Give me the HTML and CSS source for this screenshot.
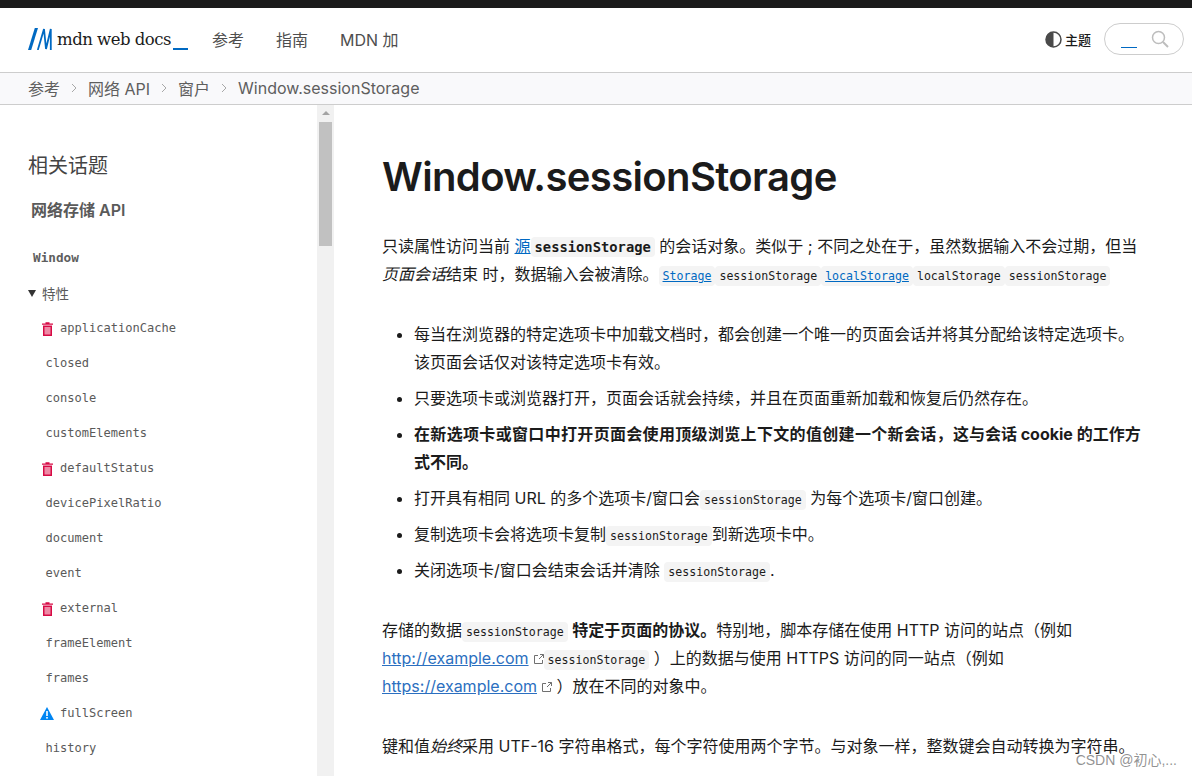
FILE: index.html
```html
<!DOCTYPE html>
<html lang="zh-CN">
<head>
<meta charset="utf-8">
<title>Window.sessionStorage</title>
<link rel="stylesheet" href="styles.css">
</head>
<body>
<div class="topline"></div>
<header class="header">
  <div class="logo">
    <svg class="logo-mark" width="24" height="22" viewBox="0 0 24 22"><path d="M0 22 6.800 0h3.200L3.200 22z" fill="#0069c2"/><path d="M9.800 22 16 1l2 20 4.800-20v21" fill="none" stroke="#0069c2" stroke-width="1.800" stroke-linejoin="bevel"/></svg>
    <span class="logo-text">mdn web docs</span>
    <span class="logo-cursor"></span>
  </div>
  <nav class="nav"><span>参考</span><span>指南</span><span>MDN 加</span></nav>
  <div class="tools">
    <span class="theme">
      <svg width="17" height="17" viewBox="0 0 17 17"><circle cx="8.500" cy="8.500" r="7.500" fill="#fff" stroke="#4a4a4a" stroke-width="1.500"/><path d="M8.500 1a7.500 7.500 0 0 0 0 15z" fill="#4a4a4a"/></svg>
      <span>主题</span>
    </span>
    <div class="search">
      <span class="search-cursor"></span>
      <svg width="18" height="18" viewBox="0 0 18 18" fill="none" stroke="#bdbdbd" stroke-width="1.500"><circle cx="7.500" cy="7.500" r="6"/><path d="M12 12l5 5" stroke-width="2"/></svg>
    </div>
  </div>
</header>
<div class="crumbs">
  <span>参考</span><svg class="chev" width="6" height="10" viewBox="0 0 6 10"><path d="M1 1l4 4-4 4" fill="none" stroke="#a8a8a8"/></svg>
  <span>网络 API</span><svg class="chev" width="6" height="10" viewBox="0 0 6 10"><path d="M1 1l4 4-4 4" fill="none" stroke="#a8a8a8"/></svg>
  <span>窗户</span><svg class="chev" width="6" height="10" viewBox="0 0 6 10"><path d="M1 1l4 4-4 4" fill="none" stroke="#a8a8a8"/></svg>
  <span>Window.sessionStorage</span>
</div>
<div class="layout">
  <aside class="sidebar">
    <div class="side-inner">
      <h2 class="side-title">相关话题</h2>
      <h3 class="side-sub">网络存储 API</h3>
      <div class="side-window">Window</div>
      <div class="side-group"><span class="tri"></span>特性</div>
      <ul class="side-list">
        <li class="with-icon"><svg class="trash" width="13" height="14" viewBox="0 0 13 14"><path d="M4.500 1.500V.3h4v1.200H12v1.300H1V1.500z" fill="#d70a45"/><path d="M2 3.500h9V14H2z" fill="#d70a45"/><rect x="3.500" y="5" width="6" height="7.500" fill="#ee8aa6"/></svg>applicationCache</li>
        <li>closed</li>
        <li>console</li>
        <li>customElements</li>
        <li class="with-icon"><svg class="trash" width="13" height="14" viewBox="0 0 13 14"><path d="M4.500 1.500V.3h4v1.200H12v1.300H1V1.500z" fill="#d70a45"/><path d="M2 3.500h9V14H2z" fill="#d70a45"/><rect x="3.500" y="5" width="6" height="7.500" fill="#ee8aa6"/></svg>defaultStatus</li>
        <li>devicePixelRatio</li>
        <li>document</li>
        <li>event</li>
        <li class="with-icon"><svg class="trash" width="13" height="14" viewBox="0 0 13 14"><path d="M4.500 1.500V.3h4v1.200H12v1.300H1V1.500z" fill="#d70a45"/><path d="M2 3.500h9V14H2z" fill="#d70a45"/><rect x="3.500" y="5" width="6" height="7.500" fill="#ee8aa6"/></svg>external</li>
        <li>frameElement</li>
        <li>frames</li>
        <li class="with-icon"><svg class="warn-icon" width="14" height="13" viewBox="0 0 14 13"><path d="M7 0l7 13H0z" fill="#0085f2"/><rect x="6.200" y="4" width="1.600" height="5" fill="#fff"/><rect x="6.200" y="10" width="1.600" height="1.600" fill="#fff"/></svg>fullScreen</li>
        <li>history</li>
      </ul>
    </div>
  </aside>
  <div class="scrollbar">
    <span class="scroll-up"></span>
    <div class="scroll-thumb"></div>
  </div>
  <main class="content">
    <h1>Window.sessionStorage</h1>
    <p class="intro">只读属性访问当前 <a>源</a><code class="strong-code">sessionStorage</code> 的会话对象。类似于 ; 不同之处在于，虽然数据输入不会过期，但当 <em>页面会话</em>结束 时，数据输入会被清除。<code><a>Storage</a></code><code>sessionStorage</code><code><a>localStorage</a></code><code>localStorage</code><code>sessionStorage</code></p>
    <ul class="points">
      <li>每当在浏览器的特定选项卡中加载文档时，都会创建一个唯一的页面会话并将其分配给该特定选项卡。该页面会话仅对该特定选项卡有效。</li>
      <li>只要选项卡或浏览器打开，页面会话就会持续，并且在页面重新加载和恢复后仍然存在。</li>
      <li><strong class="wide">在新选项卡或窗口中打开页面会使用顶级浏览上下文的值创建一个新会话，</strong><strong>这与会话 cookie 的工作方式不同。</strong></li>
      <li>打开具有相同 URL 的多个选项卡/窗口会<code>sessionStorage</code> 为每个选项卡/窗口创建。</li>
      <li>复制选项卡会将选项卡复制<code>sessionStorage</code>到新选项卡中。</li>
      <li>关闭选项卡/窗口会结束会话并清除 <code>sessionStorage</code>.</li>
    </ul>
    <p class="para">存储的数据<code>sessionStorage</code> <strong>特定于页面的协议。</strong>特别地，脚本存储在使用 HTTP 访问的站点（例如 <a class="ext">http://example.com</a><svg class="ext-icon" width="10" height="10" viewBox="0 0 10 10" fill="none" stroke="#707070"><path d="M4 1.500H.5v8h8V6M5 5l4.500-4.500M6 .5h3.500V4"/></svg><code>sessionStorage</code> ）上的数据与使用 HTTPS 访问的同一站点（例如 <a class="ext">https://example.com</a><svg class="ext-icon" width="10" height="10" viewBox="0 0 10 10" fill="none" stroke="#707070"><path d="M4 1.500H.5v8h8V6M5 5l4.500-4.500M6 .5h3.500V4"/></svg> ）放在不同的对象中。</p>
    <p class="para">键和值<em>始终</em>采用 UTF-16 字符串格式，每个字符使用两个字节。与对象一样，整数键会自动转换为字符串。</p>
  </main>
</div>
<div class="watermark">CSDN @初心,...</div>
</body>
</html>
```
FILE: styles.css
```css
* { box-sizing: border-box; }
html, body { margin: 0; height: 100%; }
body {
  width: 1192px;
  height: 776px;
  overflow: hidden;
  display: flex;
  flex-direction: column;
  position: relative;
  background: #fff;
  color: #1b1b1b;
  font-family: Inter, "Noto Sans CJK SC", sans-serif;
  font-size: 16px;
}
.topline { height: 8px; background: #1b1b1b; flex: none; }
.header {
  height: 65px;
  flex: none;
  display: flex;
  align-items: center;
  padding: 0 8px 2px 28px;
  border-bottom: 1px solid #cdcdcd;
}
.logo { display: flex; align-items: center; width: 184px; }
.logo-mark { flex: none; }
.logo-text {
  font-family: "DejaVu Serif", serif;
  font-size: 16.500px;
  letter-spacing: -.5px;
  margin-left: 5px;
  color: #1b1b1b;
}
.logo-cursor { width: 15px; height: 2px; background: #0069c2; margin: 20px 0 0 2px; }
.nav { display: flex; gap: 32px; color: #4e4e4e; font-size: 16px; }
.tools { margin-left: auto; display: flex; align-items: center; gap: 13px; }
.theme { display: flex; align-items: center; gap: 3px; font-size: 13px; color: #1b1b1b; font-weight: 500; }
.search {
  width: 80px;
  height: 32px;
  border: 1px solid #cdcdcd;
  border-radius: 16px;
  display: flex;
  align-items: center;
  justify-content: space-between;
  padding: 0 14px 0 16px;
  background: #fff;
}
.search-cursor { width: 16px; height: 1px; background: #0069c2; margin-top: 17px; }
.crumbs {
  height: 32px;
  flex: none;
  display: flex;
  align-items: center;
  gap: 11px;
  padding: 0 0 2px 28px;
  background: #f9f9fb;
  border-bottom: 1px solid #cdcdcd;
  color: #5e5e5e;
  font-size: 16px;
}
.layout { flex: 1; display: flex; min-height: 0; }
.sidebar { width: 317px; flex: none; overflow: hidden; }
.side-inner { padding: 48px 0 0 28px; }
.side-title { margin: 0; font-size: 20px; line-height: 26px; font-weight: 400; color: #444; }
.side-sub { margin: 19px 0 0 3px; font-size: 16px; line-height: 24px; font-weight: 600; color: #5a5a5a; }
.side-window { margin: 24px 0 0 5px; font: 700 12.700px/24px "DejaVu Sans Mono", monospace; color: #5e5e5e; }
.side-group { margin-top: 11px; height: 24px; display: flex; align-items: center; font-size: 13.500px; color: #5a5a5a; }
.tri { width: 0; height: 0; border: 4px solid transparent; border-top: 7px solid #333; border-bottom: 0; margin-right: 6px; }
.side-list { list-style: none; margin: 6px 0 0; padding: 0 0 0 17.500px; font: 12.050px/35px "DejaVu Sans Mono", monospace; color: #5a5a5a; }
.side-list .with-icon { display: flex; align-items: center; margin-left: -4.500px; }
.side-list .trash { margin-right: 6px; flex: none; }
.side-list .warn-icon { margin-right: 6px; flex: none; margin-left: -1px; }
.scrollbar { width: 17px; flex: none; background: #f1f1f1; position: relative; padding: 17px 2px 0; }
.scroll-up { position: absolute; top: 6px; left: 5px; width: 0; height: 0; border: 4px solid transparent; border-bottom: 4px solid #a3a3a3; border-top: 0; }
.scroll-thumb { height: 124px; background: #c1c1c1; }
.content { flex: 1; padding: 46px 46px 0 48px; font-size: 16px; line-height: 28px; overflow: hidden; color: #1b1b1b; }
h1 { margin: 0 0 29px; font-size: 40px; line-height: 52px; font-weight: 600; letter-spacing: -.63px; }
a { color: #0069c2; text-decoration: underline; }
p { margin: 0; }
code {
  font-family: "DejaVu Sans Mono", monospace;
  font-size: 11.600px;
  line-height: 1;
  background: #f4f4f4;
  border-radius: 4px;
  padding: 3px 4px;
}
.strong-code { font-weight: 700; font-size: 13.800px; padding: 2px 4px; }
.intro { margin-bottom: 32px; }
.points { margin: 0 0 32px; padding-left: 32px; list-style: disc; }
.points li { margin-bottom: 8px; }
.wide { letter-spacing: .33px; }
.para { margin-bottom: 32px; }
.ext { color: #2b6fc0; }
.ext-icon { margin-left: 5px; }
.watermark {
  position: absolute;
  right: 15px;
  bottom: 7px;
  font: 14px/18px "Liberation Sans", "Noto Sans CJK SC", sans-serif;
  color: rgba(110,110,110,.75);
}
```
